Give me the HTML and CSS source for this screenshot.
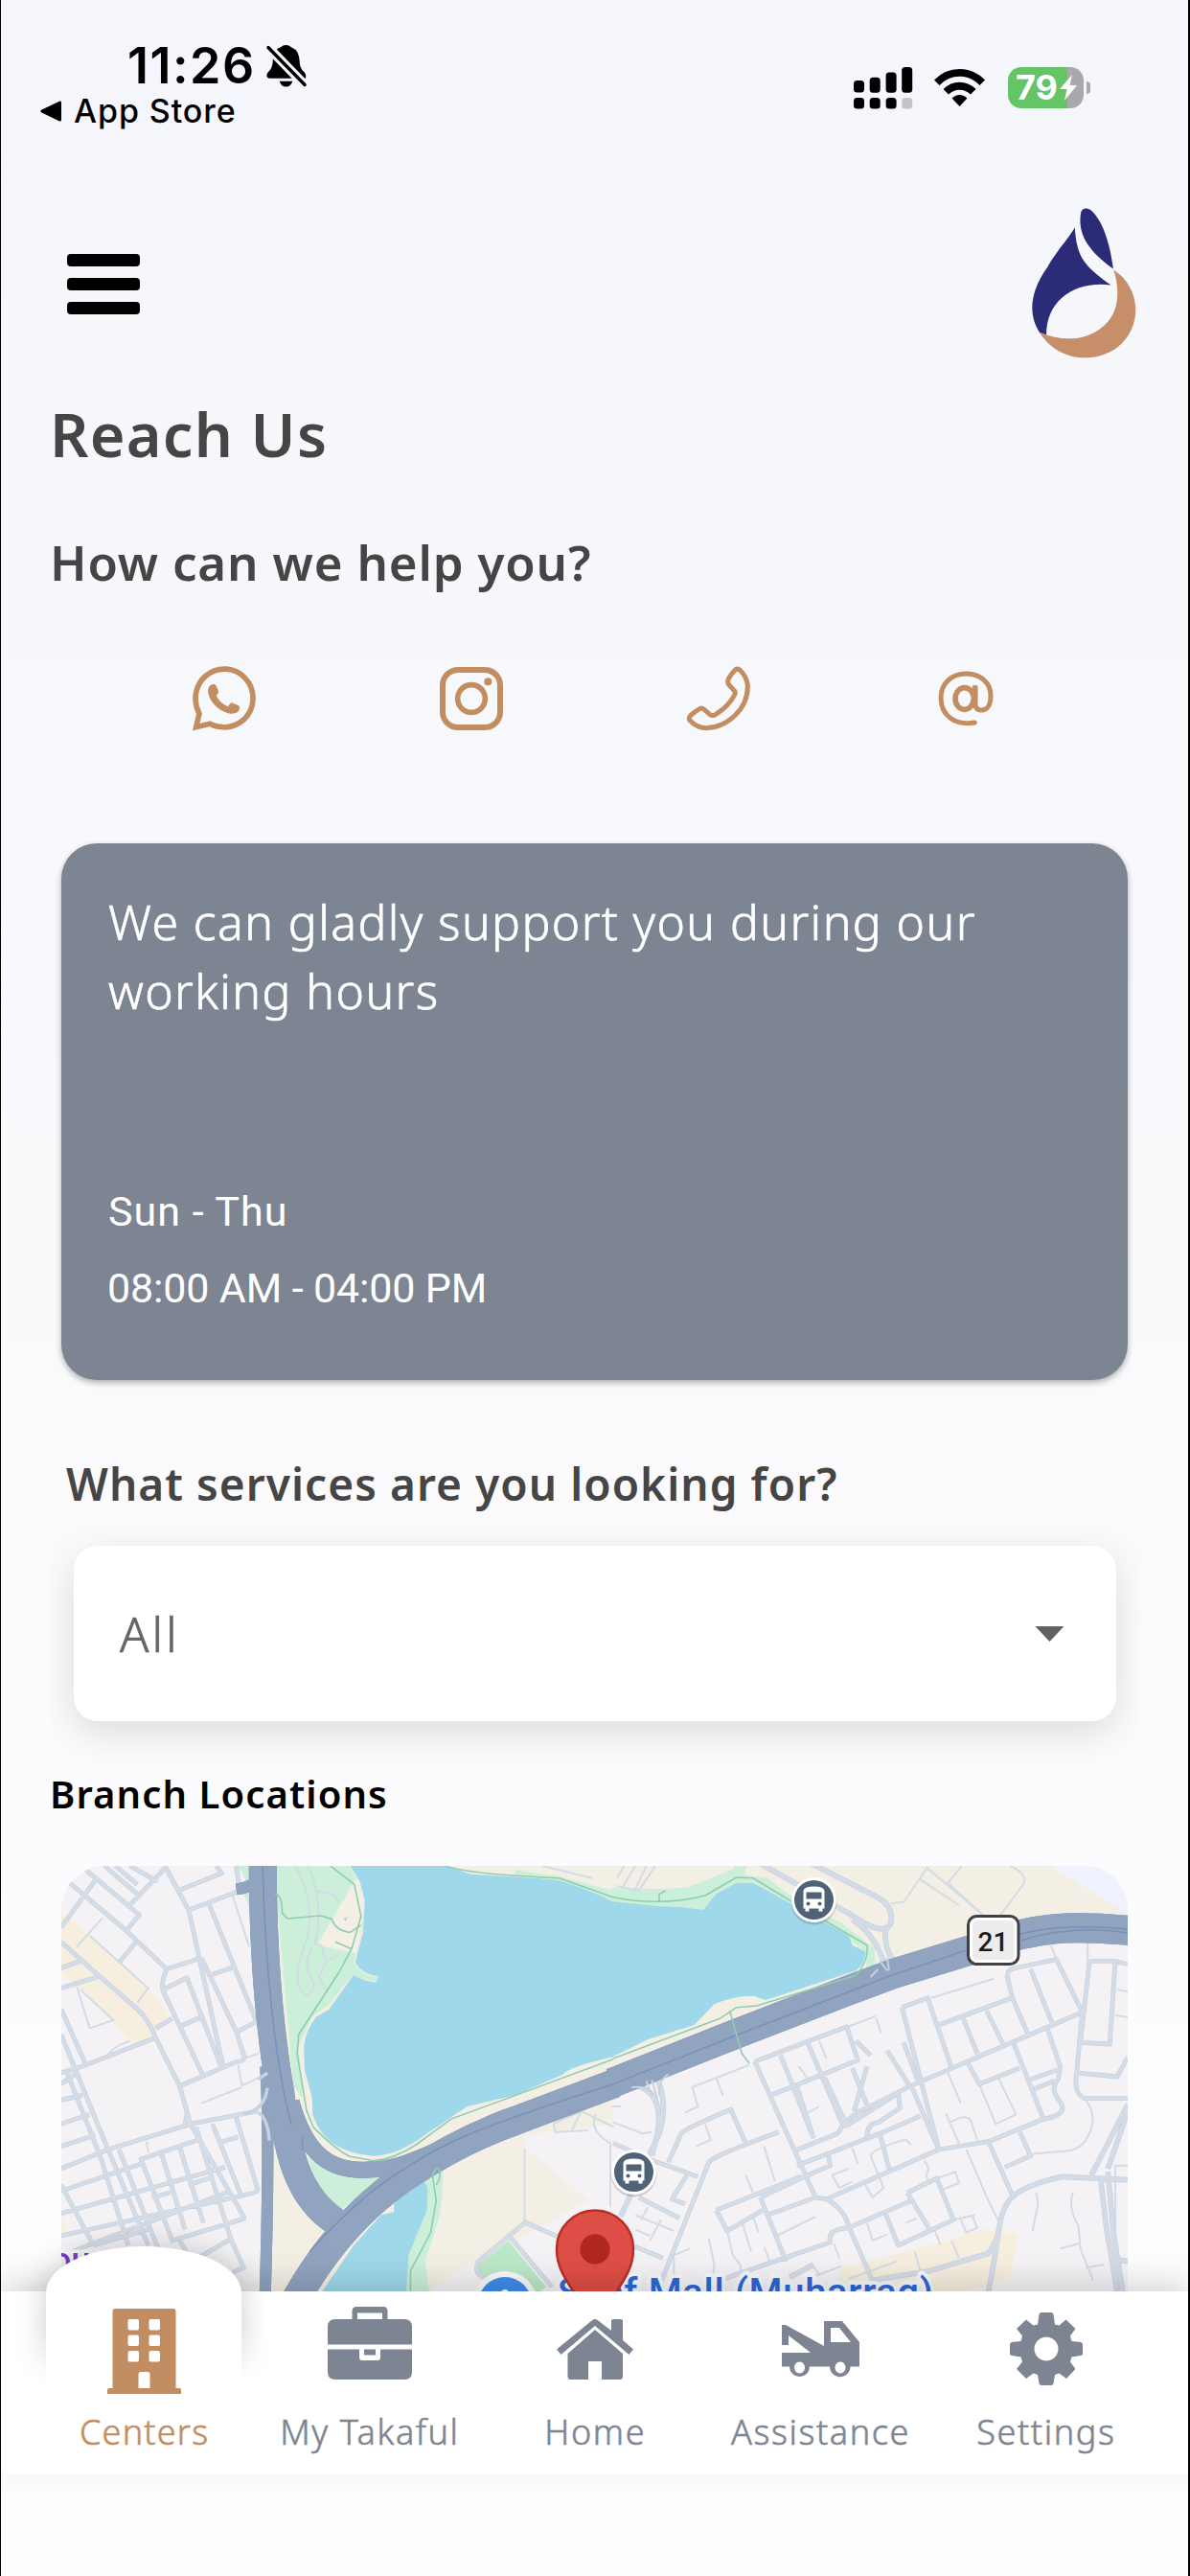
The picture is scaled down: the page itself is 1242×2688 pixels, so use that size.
FILE: index.html
```html
<!DOCTYPE html>
<html lang="en">
<head>
<meta charset="utf-8">
<title>Reach Us</title>
<link rel="stylesheet" href="styles.css">
</head>
<body>
<main class="content">
  <header class="status">
    <div class="status-left">
      <div class="clock">
        <span class="time">11:26</span>
        <svg class="bell" viewBox="0 0 43 46" aria-hidden="true">
          <path d="M4 36Q0 36 .5 32Q1 30 4 27Q7 23 7 15Q9 4 15 3Q21-2 27 3Q35 6 35.500 18Q35.500 25 40 29Q43 32 42 36ZM14 39H28Q26 45 21 45Q16 45 14 39Z"/>
          <path class="bell-gap" d="M2 3L41 43"/>
          <path class="bell-slash" d="M2 3L41 43"/>
        </svg>
      </div>
      <div class="back"><svg viewBox="0 0 22 22" aria-hidden="true"><path d="M20.500 .5Q22 0 22 2V20Q22 22 20 21.500L1.500 12.500Q-1 11 1.500 9.500Z"/></svg><span>App Store</span></div>
    </div>
    <div class="status-right">
      <svg class="signal" viewBox="0 0 61 44" aria-hidden="true">
        <rect x="0" y="14" width="11" height="12.500" rx="3.500"/><rect x="16.700" y="10.700" width="11" height="16" rx="3.500"/><rect x="33.600" y="5.400" width="11" height="21.300" rx="3.500"/><rect x="50.200" y="0" width="11" height="26.700" rx="3.500"/>
        <rect x="0" y="32" width="11" height="11.500" rx="3.500"/><rect x="16.700" y="32" width="11" height="11.500" rx="3.500"/><rect x="33.600" y="32" width="11" height="11.500" rx="3.500"/><rect x="50.200" y="32" width="11" height="11.500" rx="3.500" fill="#c4c4c8"/>
      </svg>
      <svg class="wifi" viewBox="0 0 53 39" aria-hidden="true">
        <path d="M0 11.500Q11 0 26.500 0Q42 0 53 11.500L47.500 17Q38.500 7.800 26.500 7.800Q14.500 7.800 5.500 17Z"/>
        <path d="M9.500 21Q17 13.700 26.500 13.700Q36 13.700 43.500 21L38 26.500Q33 21.800 26.500 21.800Q20 21.800 15 26.500Z"/>
        <path d="M18.500 30.500Q22 27 26.500 27Q31 27 34.500 30.500L26.500 39Z"/>
      </svg>
      <div class="battery"><span>79</span>
        <svg viewBox="0 0 18 27" aria-hidden="true"><path d="M13 0L0 15H7.500L5 27L18 11H10.500Z"/></svg>
      </div>
      <i class="nub"></i>
    </div>
  </header>

  <div class="topbar">
    <div class="menu"><i></i><i></i><i></i></div>
    <svg class="logo" viewBox="765 560 326 473" aria-hidden="true">
      <path fill="#2c2b78" d="M899 624C905 720 930 745 1012 804C900 790 810 850 810 960L789 952C755 900 755 830 812 750C840 700 870 670 899 624Z"/>
      <path fill="#2c2b78" d="M1019 753C950 705 905 650 918 577C922 560 943 560 957 577C995 620 1010 690 1019 753Z"/>
      <path fill="#c68e69" d="M1020 756C1105 810 1115 935 1030 1000C950 1055 840 1035 789 952C860 980 930 980 985 935C1035 895 1043 830 1020 756Z"/>
    </svg>
  </div>

  <h1>Reach Us</h1>
  <h2 class="help">How can we help you?</h2>

  <div class="contacts">
    <svg viewBox="63 46 198 198" aria-hidden="true">
      <path class="line" stroke-width="17" d="M74 234L84 192C60 145 75 98 105 73C143 43 195 46 227 80C262 117 260 176 224 210C195 237 153 242 117 224Z"/>
      <path class="solid" d="M127 99C134 99 138 104 140 111L145 124Q145 128 137 135Q150 160 174 170Q179 160 186 158L207 167Q212 171 210 176C208 189 195 193 183 192C150 188 113 155 111 120Q112 103 127 99Z"/>
    </svg>
    <svg viewBox="837 47 198 198" aria-hidden="true">
      <rect class="line" stroke-width="18" x="846" y="56" width="180" height="180" rx="48"/>
      <circle class="line" stroke-width="17" cx="936" cy="146" r="43"/><circle class="solid" cx="988" cy="93" r="12"/>
    </svg>
    <svg viewBox="51 47 198 198" aria-hidden="true">
      <path class="line" stroke-width="15" d="M202 56Q208 51 216 56Q237 75 241 104C243 180 175 237 110 238Q80 237 60 214Q55 207 62 199Q77 185 92 177Q98 174 106 181L124 197Q130 201 140 196Q182 170 200 134Q204 127 200 122L182 102Q176 94 182 82Q190 68 202 56Z"/>
    </svg>
    <svg viewBox="823 47 198 198" aria-hidden="true">
      <path class="line round" stroke-width="15" d="M950 221C890 232 844 200 844 144C844 98 878 68 923 68C970 68 1000 98 1000 137C1000 164 990 182 971 182Q951 182 951 158V112"/>
      <ellipse class="line" stroke-width="17" cx="918" cy="146" rx="29" ry="34"/>
      <path class="line" stroke-width="17" d="M951 105V160"/>
    </svg>
  </div>

  <section class="card">
    <p class="lead">We can gladly support you during our<br>working hours</p>
    <div class="hours"><p class="days">Sun - Thu</p><p class="clocked">08:00 AM - 04:00 PM</p></div>
  </section>

  <h2 class="services">What services are you looking for?</h2>
  <div class="select-wrap"><div class="select"><span>All</span><svg viewBox="0 0 30 16" aria-hidden="true"><path d="M0 0H30L15 16Z"/></svg></div></div>

  <h3>Branch Locations</h3>
  <div class="map">
    <svg viewBox="0 0 1113 460" aria-hidden="true">
      <defs>
        <g id="roads">
          <g transform="translate(-24 -17.300) scale(.3827 .3333)">
            <path d="M130 65L275 205L240 255L350 375L445 340M345 52L410 190L505 685M345 60L245 180M62 245L160 90M85 105L240 255M210 52L270 110M180 52L280 150M250 52L325 100M380 130L500 75L485 52M410 190L550 130L540 52M465 170L595 540L540 572L445 340M475 392L530 370M220 355L265 292M62 290L160 390L270 500Q300 530 320 590L385 740L415 860M62 372L115 350M62 435L160 400M350 375Q330 430 345 455L450 710M340 440L405 402L500 685M385 555L445 525M320 560L365 530M540 572L562 650Q560 665 540 665L385 742M62 700L130 675L320 590M62 500L130 675M62 580L190 940L300 1240M75 690L170 965L245 1240M62 735L105 700M62 860L140 830M62 785L120 770M62 930L155 895M62 1000L190 940L415 860L560 828L600 820M415 860L560 1150Q565 1155 550 1160L365 1225L280 970L435 910M220 940L330 1260M335 950L400 1190M385 930L450 1170M430 870L525 1220L560 1310L530 1325M475 860L555 1090M540 840L597 1060Q600 1070 590 1075L62 1210M490 920L545 900M62 1070L280 985M62 1140L510 995M90 1260L525 1070M150 1240L300 1190M310 1090L360 1075M410 1050L465 1030M62 1050L150 1240M385 1225L420 1290L525 1220M400 860Q410 820 400 800"/>
            <path d="M1568 1290L1328 1168L1200 1290Q1190 1310 1200 1330L1270 1384M1285 1212L1400 1370"/>
          </g>
          <g transform="translate(576 -17.300) scale(.3839 .3333)">
            <path d="M385 665L635 555L665 660L430 770M385 665L550 1090L580 1095Q630 1130 640 1180L705 1350M455 645L545 905M530 610L625 865M500 745L545 905M660 600L700 645M575 715L635 865L780 760M650 685L690 800M690 680L655 820M490 945L610 890Q640 830 690 810L810 740L1275 510M785 495L855 465L920 685M785 495L885 940M745 630L805 740M790 605L830 730M885 550L1085 465L1130 585M950 525L990 640M1015 505L1060 610M1075 390Q1070 375 1100 370L1205 345L1275 510M1085 465L1070 390M1135 375L1195 550M1295 350L1365 350L1350 610L1270 605L1295 350M1365 350L1399 360M1275 510L1260 700L1370 712L1399 650M1260 700Q1250 760 1280 780L1399 780M500 990L725 890L835 835M690 900Q690 860 720 855L780 810L775 765M510 1030L590 990L585 960M725 890L750 1000M810 740L885 940L580 1095M885 940L1020 915L1170 845Q1240 830 1215 790Q1185 750 1210 720L1215 680L1180 560M1090 610L1170 845M1135 720L1210 690M1145 750L1200 725M1020 915L1090 1095M1105 885L1135 960L1065 995M965 670L995 735L1105 685M400 1090L510 1030M280 1130L400 1075L510 1025M400 1090L470 1290M280 1130L310 1195L405 1130M420 1145L550 1090M300 1345L590 1230Q580 1190 640 1185L810 1100M800 1075L880 1030L925 1160L775 1240L740 1140M800 1075L860 1190M150 980L185 890Q195 875 320 815L360 920M120 1384L260 980Q270 960 450 885M0 920L120 980L230 1025M200 1020L160 1095L195 1110M70 1090L180 1155M40 1235L135 1280"/>
          </g>
        </g>
        <g id="avenues">
          <g transform="translate(576 -17.300) scale(.3839 .3333)">
            <path d="M700 1350L860 1320L1020 1265Q1045 1230 1050 1180C1065 1080 1100 1060 1220 1025L1399 1035M1020 1384Q1035 1300 1050 1180M1325 1030L1340 1180L1370 1384M1345 1010L1360 1200L1385 1384M1300 1020L1399 800M1345 1000L1399 820M1350 1280L1399 1290M480 1340L545 1300"/>
            <path d="M400 45L640 200Q740 280 755 230Q765 170 700 140L540 45M650 220Q710 260 745 380M740 240Q735 340 780 360M60 740Q140 760 120 890L105 960M120 720Q150 800 125 890L20 1150"/>
          </g>
        </g>
        <g id="highways">
          <g transform="translate(-24 -17.300) scale(.3827 .3333)">
            <path stroke-width="12" d="M620 680Q632 900 618 1420"/>
            <path stroke-width="12" d="M540 125Q575 120 600 100"/>
            <path stroke-width="29" d="M612 30C612 300 630 560 660 760C680 940 700 1080 810 1165"/>
            <path stroke-width="17" d="M690 790C730 960 800 1010 900 1003C1000 1000 1040 960 1120 930"/>
            <path stroke-width="30" d="M702 1410C780 1250 880 1120 1000 1025C1100 950 1200 890 1300 850L1573 732"/>
          </g>
          <path stroke-width="31" transform="translate(576 -17.300) scale(.3839 .3333)" d="M-4 732L340 575L620 450L760 390L1000 305C1150 240 1250 238 1410 255"/>
        </g>
      </defs>
      <rect width="1113" height="460" fill="#f4f2f4"/>
      <g transform="translate(-24 -17.300) scale(.3827 .3333)">
        <path fill="#f3efe4" d="M650 52H1568V860L1325 895V930L1500 1100L1130 1330L1068 1384H640Z"/>
        <path fill="#f6efdf" d="M62 200L130 260L300 435L365 530L310 590L262 612L200 540L62 385ZM62 1150L85 1200L62 1220Z"/>
        <path fill="#cbefd8" d="M545 52H575V180L560 140L565 95ZM650 52H850L880 105L886 250L862 360Q890 398 925 400L920 415Q880 410 858 392L790 490L750 520Q725 560 720 630V780L695 740L650 150Z"/>
        <path fill="#f3efe4" d="M846 52L878 105L886 180L880 270L860 355L925 398L920 418L860 395L792 502L755 525Q725 570 708 620L735 850Q790 970 915 978Q980 975 1040 930L1170 820L1568 690V500L760 300L886 52Z"/>
        <path fill="#9fd8ea" d="M850 52L877 100L890 160L886 260L864 355Q885 392 928 398L920 417Q880 410 860 393L792 502L757 525Q727 570 724 620L726 690L747 780L748 830Q780 950 915 960Q980 960 1060 890L1170 805L1300 770L1430 705Q1450 680 1568 650V160Q1500 120 1420 95L1180 78L1110 52Z"/>
        <path fill="#cbefd8" d="M862 360Q885 395 925 400L920 413Q880 408 858 392ZM1300 65L1420 85L1568 130V165Q1500 125 1420 98L1300 83ZM735 950L930 1030L825 1130Q745 1050 735 950Z"/>
        <path fill="#cbefd8" d="M1045 1025L1105 985L1100 1100L1092 1160L1055 1290L1068 1400H1003L1010 1270L1060 1130Z"/>
        <path fill="#9fd8ea" d="M1045 1025L1000 1065L970 1110V1135L935 1145L860 1240L765 1400H1003L1010 1270L1060 1130L1062 1060Z"/>
        <path fill="#bbe8c8" d="M1282 1225L1385 1370L1350 1400H1270L1190 1310Z"/>
        <path fill="#9fd8ea" d="M832 216L844 212L838 226Z"/>
      </g>
      <g transform="translate(576 -17.300) scale(.3839 .3333)">
        <path fill="#f3efe4" d="M0 52H1399V200L1100 240L700 400L0 680Z"/>
        <path fill="#f0f3fd" d="M1190 52H1399V195L1380 190Z"/>
        <path fill="#cbefd8" d="M-4 120L120 125L200 120L330 60L325 52H362L357 80L420 90L500 160L620 230L710 310L712 380L690 395L686 320L570 225L380 105L335 105L280 140L245 192L120 180L-4 170Z"/>
        <path fill="#9fd8ea" d="M-6 652L95 595L220 550L275 485Q340 455 385 460L415 472L660 380Q685 360 686 320L650 300L640 270L570 225L380 105L335 105L280 140L245 190L190 182L120 178L-6 163Z"/>
        <path fill="#f6efdf" d="M620 1310L860 1240L1000 1190L1100 1205L1080 1340L930 1400H600Z"/>
      </g>
      <g class="lanes" transform="translate(576 -17.300) scale(.3839 .3333)">
        <path d="M215 745L370 675M215 745L230 805L195 825M280 715L298 770M560 600L580 655M505 680L530 720M530 825L560 805M715 530L728 575M640 555L715 522M865 465L1035 405M910 700L945 795M905 828L940 920M915 855Q970 820 975 860L990 910M700 960Q700 940 795 908L810 925M650 935L665 985M845 975Q865 1000 850 1020L862 1050M700 960L735 1060L705 1090L680 1040M410 930L440 1040M360 1020L380 1075M445 1210L550 1150M350 1165L375 1260M380 1150L395 1200M410 1245L425 1290M310 1195L325 1270L345 1300L350 1350M260 1220L275 1300L270 1340M165 1384V1270L210 1250M595 1020L640 1000M595 1020L615 1060L650 1040M690 1170L705 1225L745 1205M795 1170L825 1155M875 1195L890 1240M880 1030L930 1010L940 1045L895 1065M925 1160L985 1145M945 1160L960 1200L990 1185L975 1145M960 940L1020 1100L1050 1170M995 735L1040 860L1095 830L1045 710M1285 785Q1320 840 1290 900Q1270 945 1220 945L1130 955M1250 1075Q1235 1120 1265 1180L1270 1250L1305 1350M1215 1250L1265 1235M1285 1310L1335 1300M1150 1075L1155 1110L1140 1195M1365 1195V990H1399M1370 440L1399 445M1365 520L1399 525M1190 300L1205 345M1290 290V350M855 55L790 165L755 170M835 95L940 175M855 60L1010 210M950 50L910 105L1000 200M1080 52Q1130 80 1115 110L1050 210M-4 805L20 805M0 855L80 890L105 885M250 860L265 910L225 930M95 1120L75 1160M60 1190L100 1210M130 1160L100 1225M60 1145L165 1195M540 1300L560 1330M540 1340L620 1305M600 1235L615 1280M820 1260L835 1320M640 1345L770 1290M920 1225L940 1280M30 52L10 90M60 52L25 120M90 52L60 125M115 52L70 128M10 115L70 130"/>
      </g>
      <g class="lanes" transform="translate(-24 -17.300) scale(.3827 .3333)">
        <path d="M175 215L105 305M140 270L300 435L270 480M105 430L140 560L205 535L115 440M190 645Q200 620 250 600M530 145L575 305M545 675L555 740L620 705M445 795L555 745M295 915L300 950M560 655L600 640M1326 937V1168M1405 860L1480 820L1570 870M1405 860L1410 885L1500 880M1480 820L1455 880M1520 830Q1500 880 1560 920V1120M1375 52L1510 90M700 52C740 130 745 210 735 270C715 340 705 360 708 420C715 470 750 465 752 425C750 395 715 385 745 310M735 52C760 110 775 200 755 295L770 300L785 350L765 400L785 435M785 350L812 335M755 130L805 140L820 168"/>
      </g>
      <use href="#roads" class="road-edge"/>
      <use href="#avenues" class="avenue-edge"/>
      <use href="#roads" class="road"/>
      <use href="#avenues" class="avenue"/>
      <use href="#highways" class="hw-edge"/>
      <use href="#highways" class="hw"/>
      <g class="hw-line">
        <g transform="translate(-24 -17.300) scale(.3827 .3333)">
          <path d="M612 50C616 300 640 650 690 860M720 900V940M740 1260Q880 1080 1000 1000C1100 920 1200 870 1568 735"/>
        </g>
        <path transform="translate(576 -17.300) scale(.3839 .3333)" d="M0 735L340 580L760 393L1000 300C1150 240 1250 235 1400 250M1110 285Q1250 235 1400 262"/>
      </g>
      <g class="trails">
        <path transform="translate(-24 -17.300) scale(.3827 .3333)" d="M797 52L862 110L880 210L855 310L820 385L710 580L706 640L732 820L750 870Q810 940 850 962L915 975Q970 970 1030 925L1125 845L1568 657M645 140Q665 140 665 200L680 217L770 208L800 218Q810 255 850 260L880 238M810 290L855 312M1110 52Q1170 78 1420 90L1568 150M1075 1020L1085 1100L1070 1200L1015 1320V1384M1075 1020Q1090 980 1095 1010Q1098 1030 1085 1050"/>
        <path transform="translate(576 -17.300) scale(.3839 .3333)" d="M0 150Q130 180 250 145L335 88L380 90L480 160L570 220L690 300Q695 350 660 395L390 490L335 495L290 530L0 655M318 510L330 560L350 640L370 670M125 165V140L143 130"/>
      </g>
      <g class="bridge" transform="translate(-24 -17.300) scale(.3827 .3333)"><path d="M560 828Q615 820 625 747M600 825Q625 840 630 912M600 720L625 700"/></g>
      <g class="bridge thin" transform="translate(576 -17.300) scale(.3839 .3333)"><path d="M50 745Q100 740 110 770M90 725L105 770M105 722L120 780M150 705Q125 720 125 770M700 400L720 375M745 340L750 380M725 350L745 380"/></g>
      <text class="area" x="-10" y="424">ous</text>
      <circle cx="463" cy="457" r="34" fill="#f8f9fa"/><circle cx="463" cy="457" r="28" fill="#3f8ceb"/><circle cx="463" cy="446" r="4" fill="#fff"/>
      <text class="place" x="518" y="459">Seef Mall (Muharraq)</text>
      <g id="stop" transform="translate(785.500 35.500)">
        <circle r="24" cy="2" fill="#000" opacity=".15"/><circle r="23.500" fill="#fff"/><circle r="20.500" fill="#4f6276"/>
        <path fill="#fff" d="M-11 -9Q-11 -14 0 -14Q11 -14 11 -9V9H9V12H5V9H-5V12H-9V9H-11Z"/><rect x="-8" y="-8" width="16" height="7" fill="#4f6276"/><circle cx="-6" cy="4" r="2" fill="#4f6276"/><circle cx="6" cy="4" r="2" fill="#4f6276"/>
      </g>
      <use href="#stop" x="-188" y="284"/>
      <rect x="946.500" y="52.500" width="52.500" height="50" rx="9" fill="#fff" stroke="#404040" stroke-width="3"/><rect x="951" y="57" width="43.500" height="41" rx="5" fill="#ececec"/>
      <text class="shield" x="972.500" y="88.500" text-anchor="middle">21</text>
      <path d="M557 359.500A40 40 0 0 1 597 400C597 425 580 440 571 459Q565 475 557 490Q549 475 543 459C534 440 517 425 517 400A40 40 0 0 1 557 359.500Z" fill="#de4e46" stroke="#b92f26" stroke-width="2.500"/>
      <circle cx="557" cy="400" r="15.700" fill="#b0281e"/>
    </svg>
  </div>
</main>

<nav class="tabs">
  <div class="tab active">
    <div class="ico"><svg width="77" height="89" viewBox="0 0 77 89" aria-hidden="true"><path fill-rule="evenodd" d="M8.500 0H68.500Q71.500 0 71.500 3V83H75Q77 83 77 85V89H0V85Q0 83 2 83H5.500V3Q5.500 0 8.500 0ZM23.500 11Q21.500 11 21.500 13V20.500Q21.500 22.500 23.500 22.500H31Q33 22.500 33 20.500V13Q33 11 31 11ZM45.500 11Q43.500 11 43.500 13V20.500Q43.500 22.500 45.500 22.500H53Q55 22.500 55 20.500V13Q55 11 53 11ZM23.500 27.500Q21.500 27.500 21.500 29.500V37Q21.500 39 23.500 39H31Q33 39 33 37V29.500Q33 27.500 31 27.500ZM45.500 27.500Q43.500 27.500 43.500 29.500V37Q43.500 39 45.500 39H53Q55 39 55 37V29.500Q55 27.500 53 27.500ZM23.500 44Q21.500 44 21.500 46V53.500Q21.500 55.500 23.500 55.500H31Q33 55.500 33 53.500V46Q33 44 31 44ZM45.500 44Q43.500 44 43.500 46V53.500Q43.500 55.500 45.500 55.500H53Q55 55.500 55 53.500V46Q55 44 53 44ZM35 66Q32.500 66 32.500 68.500V83H44.500V68.500Q44.500 66 42 66Z"/></svg></div>
    <span>Centers</span>
  </div>
  <div class="tab">
    <div class="ico up1"><svg width="88" height="76" viewBox="0 0 88 76" aria-hidden="true"><path fill-rule="evenodd" d="M30 0H58Q62.500 0 62.500 4.500V13H80Q88 13 88 21V39.500H0V21Q0 13 8 13H25.500V4.500Q25.500 0 30 0ZM31 6.500V13H57V6.500ZM0 44.500H33V53Q33 56 36 56H52Q55 56 55 53V44.500H88V68Q88 76 80 76H8Q0 76 0 68ZM38 44.500H50V50.500H38Z"/></svg></div>
    <span>My Takaful</span>
  </div>
  <div class="tab">
    <div class="ico up2"><svg width="80" height="63" viewBox="0 0 80 63" aria-hidden="true"><path d="M36 2Q40-2 44 2L57 12V2Q57 0 59 0H67Q69 0 69 2V22L80 31.500L75.500 37L40 7L4.500 37L0 31.500ZM40 11L69 36V60Q69 63 66 63H47V44H33V63H14Q11.500 63 11.500 60V36Z"/></svg></div>
    <span>Home</span>
  </div>
  <div class="tab">
    <div class="ico up3"><svg width="81" height="59" viewBox="0 0 81 59" aria-hidden="true"><path fill-rule="evenodd" d="M0 4H4L44 26V0H63L81 22V47.500H71.500A10.500 10.500 0 0 1 50 47.500H29A10.500 10.500 0 0 1 8 47.500H0V33H30L7 15V25H0ZM51 7V22H72L60 7ZM18.500 42.500A5.500 6 0 1 0 18.510 42.500ZM61 42.500A5.500 6 0 1 0 61.010 42.500Z"/></svg></div>
    <span>Assistance</span>
  </div>
  <div class="tab">
    <div class="ico up4"><svg width="76" height="76" viewBox="0 0 76 76" aria-hidden="true"><path fill-rule="evenodd" d="M33 0H43Q45 0 45.500 2L47 12.500L51.500 13.500L58.500 7.500L68.500 17L63 24.500L64.500 30L74 31Q76 31.500 76 33.500V43Q76 45 74 45L64.500 46.500L63 51.500L68.500 59L59 69L51.500 63.500L47 65L45.500 74Q45 76 43 76H33Q31 76 30.500 74L29 65L24.500 63.500L17 69L7 59L13 51.500L11.500 46.500L2 45Q0 45 0 43V33.500Q0 31.500 2 31L11.500 30L13 24.500L7 17L17 7.500L24.500 13.500L29 12.500L30.500 2Q31 0 33 0ZM38 25.500A12.500 12.500 0 1 0 38.010 25.500Z"/></svg></div>
    <span>Settings</span>
  </div>
</nav>
<div class="home-space"></div>
</body>
</html>
```
FILE: styles.css
```css
* { box-sizing: border-box; margin: 0; padding: 0; }
body {
  width: 1242px; height: 2688px; overflow: hidden;
  display: flex; flex-direction: column;
  border-left: 1px solid #000; border-right: 2px solid #000;
  background: linear-gradient(#f5f6fb, #fefefe);
  font-family: "Noto Sans", "Open Sans", sans-serif; color: #454545;
}
svg { display: block; overflow: visible; }
h1, h2, h3 { font-weight: 600; }
.content { flex: 1; min-height: 0; overflow: hidden; }

.status { display: flex; justify-content: space-between; height: 215px; padding: 43px 102px 0 41px; color: #000; font-family: Inter, sans-serif; }
.clock { display: flex; gap: 11px; padding-left: 91px; }
.time { font-size: 52px; line-height: 52px; font-weight: 600; letter-spacing: 1.5px; }
.bell { width: 42px; height: 46px; margin-top: 3px; }
.bell-gap { stroke: #f5f6fa; stroke-width: 10; }
.bell-slash { stroke: #000; stroke-width: 3.5; stroke-linecap: round; }
.back { display: flex; align-items: center; gap: 13px; margin-top: 4px; font-size: 34px; line-height: 34px; font-weight: 500; letter-spacing: .9px; }
.back svg { width: 22px; height: 22px; }
.status-right { display: flex; align-items: flex-start; padding-top: 27px; }
.signal { width: 61px; height: 44px; margin-right: 23px; }
.wifi { width: 53px; height: 39px; margin: 2px 24px 0 0; }
.battery { display: flex; align-items: center; gap: 2px; width: 79px; height: 43px; padding-left: 8px; border-radius: 14px; background: linear-gradient(90deg, #65c466 62px, #a9a9ac 62px); color: #fff; font-size: 36px; font-weight: 700; line-height: 43px; }
.battery svg { width: 18px; height: 27px; fill: #fff; }
.nub { width: 4px; height: 13px; margin: 15px 0 0 3px; border-radius: 0 5px 5px 0; background: #a9a9ac; }

.topbar { display: flex; justify-content: space-between; align-items: center; height: 160px; padding: 0 54px 0 69px; }
.menu { display: grid; gap: 12px; padding-top: 3px; }
.menu i { width: 76px; height: 13px; border-radius: 4px; background: #000; }
.logo { width: 109px; height: 158px; }

h1 { margin: 41px 0 0 51px; font-size: 63px; line-height: 74px; letter-spacing: 1.2px; }
.help { margin: 66px 0 0 51px; font-size: 51px; line-height: 60px; letter-spacing: .83px; }
.contacts { display: grid; grid-template-columns: repeat(4, 258px); justify-items: center; padding: 80px 0 0 104px; }
.contacts svg { width: 66px; height: 66px; }
.line { fill: none; stroke: #c28e61; }
.round { stroke-linecap: round; }
.solid { fill: #c28e61; }

.card { width: 1113px; height: 560px; margin: 118px 0 0 63px; padding: 46px 49px; border-radius: 37px; background: #7e8592; color: #fff; box-shadow: 0 3px 6px rgba(0, 0, 0, .3); }
.lead { font-size: 50px; font-weight: 300; line-height: 72.3px; letter-spacing: 1.4px; -webkit-text-stroke: .7px currentColor; }
.hours { margin-top: 153px; font-family: Roboto, sans-serif; font-size: 43px; line-height: 80px; }
.days { letter-spacing: 1px; }
.clocked { letter-spacing: -.15px; margin-left: -1px; }

.services { margin: 80px 0 0 68px; font-size: 46px; line-height: 56px; letter-spacing: 1.06px; }
.select-wrap { width: 1138px; height: 272px; margin-left: 51px; padding: 37px 25px 0; overflow: hidden; }
.select { display: flex; align-items: center; justify-content: space-between; height: 183px; padding: 0 54px 0 48px; border-radius: 25px; background: #fff; font-size: 50px; font-weight: 300; -webkit-text-stroke: .7px currentColor; color: #666; letter-spacing: 3px; box-shadow: 0 12px 40px rgba(0, 0, 0, .13); }
.select svg { width: 31px; height: 16px; fill: #616161; }

h3 { margin-left: 51px; font-size: 40px; line-height: 48px; letter-spacing: 1.1px; color: #000; }
.map { width: 1113px; height: 600px; margin: 51px 0 0 63px; border-radius: 46px; overflow: hidden; background: #f4f2f4; }
.map svg { width: 1113px; height: 460px; overflow: hidden; }
.map path { vector-effect: non-scaling-stroke; }
.road, .road-edge, .avenue, .avenue-edge, .lanes, .hw, .hw-edge, .hw-line, .trails, .bridge { fill: none; stroke-linejoin: round; }
.lanes { stroke: #d2dbe6; stroke-width: 2px; }
.road-edge { stroke: #c6d0dc; stroke-width: 4.8px; }
.road { stroke: #d4dce8; stroke-width: 3.6px; }
.avenue-edge { stroke: #c6d0dc; stroke-width: 5.6px; }
.avenue { stroke: #d3dbe7; stroke-width: 4.4px; }
.hw-edge { stroke: #7690b4; }
.hw { stroke: #90a3bf; }
.hw-line { stroke: #7891b4; stroke-width: 1.5px; }
.trails { stroke: #8fcdb2; stroke-width: 1.6px; }
.bridge { stroke: #c6d2df; stroke-width: 3.5px; }
.thin { stroke-width: 2px; }
.place { font: 500 40px Roboto, sans-serif; letter-spacing: .7px; fill: #2d68d8; stroke: #f7f8fb; stroke-width: 8px; paint-order: stroke; stroke-linejoin: round; }
.area { font: 500 36px Roboto, sans-serif; fill: #7742c0; stroke: #f7f8fb; stroke-width: 7px; paint-order: stroke; }
.shield { font: 500 28px Roboto, sans-serif; fill: #1c1c1c; }

.tabs { position: relative; display: grid; grid-template-columns: repeat(5, 235.3px); height: 190px; padding-left: 32px; background: #fff; box-shadow: 0 -8px 32px rgba(0, 0, 0, .16); color: #7e8592; }
.tab { position: relative; display: flex; flex-direction: column; align-items: center; fill: #7e8592; }
.tab span { position: relative; z-index: 1; font-size: 36px; font-weight: 300; line-height: 44px; letter-spacing: 1.6px; white-space: nowrap; -webkit-text-stroke: .6px currentColor; }
.ico { position: relative; z-index: 1; height: 125px; padding-top: 18px; }
.ico.up1 { padding-top: 16px; }
.ico.up2 { padding-top: 29px; }
.ico.up3 { padding-top: 31px; }
.ico.up4 { padding-top: 22px; }
.active { fill: #c28e61; color: #c28e61; }
.active span { letter-spacing: 1.2px; }
/* raised bulge behind the selected tab */
.active::before { content: ""; position: absolute; left: 15px; top: -47px; width: 204px; height: 145px; border-radius: 102px 102px 0 0 / 48px 48px 0 0; background: #fff; box-shadow: 0 0 32px rgba(0, 0, 0, .2); }
.active::after { content: ""; position: absolute; left: -20px; top: 40px; width: 275px; height: 100px; background: linear-gradient(rgba(255, 255, 255, 0), #fff 55%); }
.home-space { position: relative; height: 107px; background: linear-gradient(#f8f8f8, #fefefe 24px); }
```
